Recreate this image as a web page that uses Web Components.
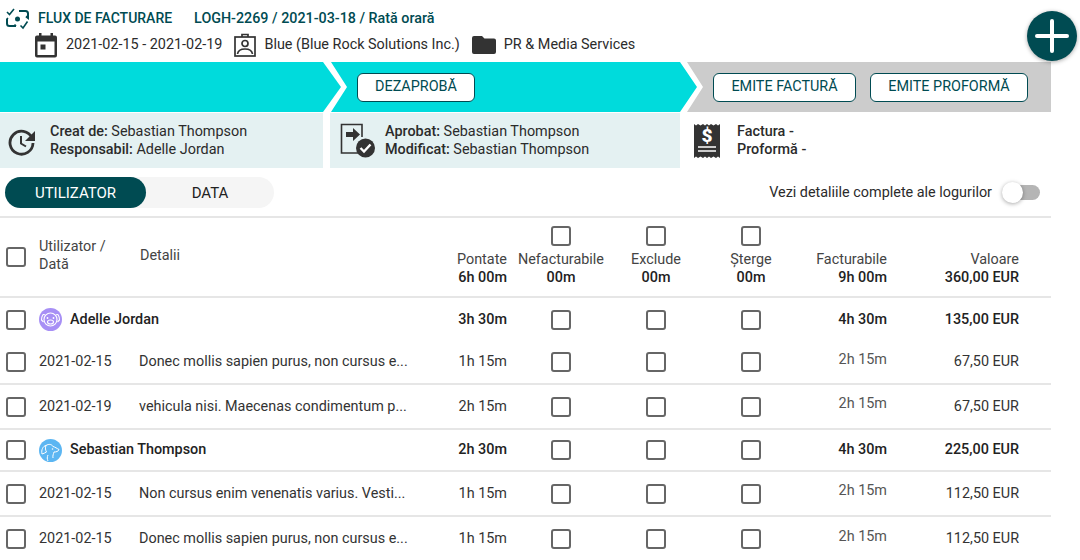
<!DOCTYPE html>
<html lang="ro">
<head>
<meta charset="utf-8">
<title>Flux de facturare</title>
<style>
  html, body { margin: 0; height: 100%; overflow: hidden; background: #fff; }
  body { font: 14.4px/18px Roboto, "Liberation Sans", sans-serif; color: #2b2b2b; }
</style>
</head>
<body>
<billing-page>
  <flow-header></flow-header>
  <flow-bar></flow-bar>
  <info-row></info-row>
  <view-bar></view-bar>
  <log-table>
    <log-head></log-head>
    <log-row pontate="3h 30m" fact="4h 30m" val="135,00 EUR" group h="43">
      <user-name slot="date" avatar="pig">Adelle Jordan</user-name>
    </log-row>
    <log-row pontate="1h 15m" fact="2h 15m" val="67,50 EUR" h="44" lined>
      <span slot="date">2021-02-15</span><span slot="details">Donec mollis sapien purus, non cursus e...</span>
    </log-row>
    <log-row pontate="2h 15m" fact="2h 15m" val="67,50 EUR" h="45" lined>
      <span slot="date">2021-02-19</span><span slot="details">vehicula nisi. Maecenas condimentum p...</span>
    </log-row>
    <log-row pontate="2h 30m" fact="4h 30m" val="225,00 EUR" group h="42" lined>
      <user-name slot="date" avatar="dog">Sebastian Thompson</user-name>
    </log-row>
    <log-row pontate="1h 15m" fact="2h 15m" val="112,50 EUR" h="45" lined>
      <span slot="date">2021-02-15</span><span slot="details">Non cursus enim venenatis varius. Vesti...</span>
    </log-row>
    <log-row pontate="1h 15m" fact="2h 15m" val="112,50 EUR" h="44">
      <span slot="date">2021-02-15</span><span slot="details">Donec mollis sapien purus, non cursus e...</span>
    </log-row>
  </log-table>
</billing-page>

<script>
const DARK = '#004b52';
const GRID = '34px 100px 278px 89px 108px 82px 108px 82px 132px';

const ICONS = {
  flux: `<svg width="25" height="24" viewBox="0 0 25 24" fill="none" stroke="${DARK}" stroke-width="2"><path d="M2 6l2.5 2.5L9 3" stroke-width="1.6"/><path d="M14 5h6.5a2.5 2.5 0 0 1 2.5 2.5V12l-2-1.6M2 13v4.500a2.500 2.500 0 0 0 2.500 2.500H11"/><path d="M16 21l2.500 2.500L23 17" stroke-width="1.600" transform="translate(-.5 -1.500)"/><path d="M3 12l-1.500 1.500M11 20l-1.500-1.500" stroke-width="1.600"/><circle cx="12.500" cy="13" r="2.500" fill="${DARK}" stroke="none"/><circle cx="6" cy="13" r="1.200" fill="${DARK}" stroke="none" opacity="0"/></svg>`,
  calendar: `<svg width="24" height="26" viewBox="0 0 24 26"><path fill="#333" d="M5 1h2.500v2.500h9V1H19v2.500h2A2 2 0 0 1 23 5.500v18a2 2 0 0 1-2 2H3a2 2 0 0 1-2-2v-18a2 2 0 0 1 2-2h2zM3.500 9.500v13.500h17V9.500z"/><rect x="6.500" y="12.500" width="5" height="5" fill="#333"/></svg>`,
  badge: `<svg width="22" height="24" viewBox="0 0 22 24" fill="none" stroke="#333" stroke-width="1.700"><rect x="1" y="4" width="20" height="19"/><path d="M8 4V1.500h6V4"/><circle cx="11" cy="10.500" r="3"/><path d="M3.500 21c.5-3.500 4-5 7.500-5s7 1.500 7.500 5"/></svg>`,
  folder: `<svg width="24" height="20" viewBox="0 0 24 20"><path fill="#333" d="M2 1h8l2.500 2.500H22a2 2 0 0 1 2 2V17a2 2 0 0 1-2 2H2a2 2 0 0 1-2-2V3a2 2 0 0 1 2-2z"/></svg>`,
  history: `<svg width="30" height="30" viewBox="0 0 30 30" fill="none" stroke="#333" stroke-width="2.800"><path d="M25 12a11.500 11.500 0 1 0 1 5"/><path d="M14 10v7.500l5 3" stroke-width="2"/><path fill="#333" stroke="none" d="M28 5v10H18z"/></svg>`,
  approve: `<svg width="36" height="36" viewBox="0 0 36 36"><path fill="none" stroke="#333" stroke-width="1.600" d="M22 30H1.500V1.500H22V14"/><path fill="#333" d="M6 9h7V5l7 6.500-7 6.500v-4H6z"/><circle cx="25.500" cy="25" r="9.500" fill="#333"/><path fill="none" stroke="#fff" stroke-width="2.400" d="M20.500 25l3.500 3.500 6.500-7"/></svg>`,
  receipt: `<svg width="26" height="36" viewBox="0 0 26 36"><path fill="#333" d="M0 1l2 1.500L4 1l2.500 1.500L9 1l2 1.500L13 1l2 1.500L17 1l2.500 1.500L22 1l2 1.500L26 1v34l-2-1.500-2 1.500-2.500-1.500L17 35l-2-1.500-2 1.500-2-1.500L9 35l-2.500-1.500L4 35l-2-1.500L0 35z"/><text x="13" y="19" text-anchor="middle" fill="#fff" font-family="Roboto, sans-serif" font-weight="900" font-size="19">$</text><path stroke="#fff" stroke-width="1.500" d="M4 24h18M4 28h18"/></svg>`,
  pig: `<svg width="23" height="23" viewBox="0 0 23 23"><circle cx="11.500" cy="11.500" r="11.500" fill="#a78ff5"/><g fill="none" stroke="#fff" stroke-width="1.100"><circle cx="11.500" cy="11.500" r="6.500"/><path d="M6 7C4 5.500 2.500 8 2.500 12l2 2M17 7c2-1.500 3.500 1 3.500 5l-2 2"/><ellipse cx="11.500" cy="14" rx="3" ry="2"/></g><circle cx="8.500" cy="10" r=".9" fill="#fff"/><circle cx="14.500" cy="10" r=".9" fill="#fff"/></svg>`,
  dog: `<svg width="23" height="23" viewBox="0 0 23 23"><circle cx="11.500" cy="11.500" r="11.500" fill="#5cb6f2"/><g fill="none" stroke="#fff" stroke-width="1"><path d="M3 15c-1-4 1-8 4-8.500 3-2 6-1 7 1 2 .5 4 2 6 3-.5 2-3 2.500-5 2.500-.5 2-1.500 3.500-1 6"/><path d="M7 6.500c-1 2-.5 5 .5 6.500-1.500 1-3 1.500-4.500 2M9 22c-1-2-1-4 0-6"/></g><circle cx="13.500" cy="10" r=".8" fill="#fff"/></svg>`
};

function define(name, css, html, setup) {
  customElements.define(name, class extends HTMLElement {
    constructor() {
      super();
      this.attachShadow({ mode: 'open' });
    }
    connectedCallback() {
      const body = typeof html === 'function' ? html(this) : html;
      this.shadowRoot.innerHTML = `<style>${css}</style>${body}`;
      if (setup) setup(this);
    }
  });
}

define('billing-page', `
  :host { display: block; position: relative; width: 1080px; height: 560px; overflow: hidden; }
  .fab { position: absolute; left: 1027px; top: 11px; width: 50px; height: 50px; border-radius: 50%;
         background: ${DARK}; box-shadow: 0 1px 4px rgba(0,0,0,.35); z-index: 5; }
  .fab::before, .fab::after { content: ""; position: absolute; background: #fff; border-radius: 2px; }
  .fab::before { left: 8px; right: 8px; top: 23px; height: 4px; }
  .fab::after { top: 8px; bottom: 8px; left: 23px; width: 4px; }
`, `<slot></slot><div class="fab"></div>`);

define('flow-header', `
  :host { display: block; height: 62px; box-sizing: border-box; padding: 6px 0 0 5px; }
  .top { display: flex; align-items: center; height: 24px; color: ${DARK}; font-weight: 500; font-size: 14px; }
  .top svg { margin-right: 8px; }
  .top b { font-weight: 500; margin-left: 22px; font-size: 14.300px; }
  .sub { display: flex; align-items: center; height: 26px; margin: 2px 0 0 29px; }
  .sub svg { display: block; }
  .sub span { margin: 0 12px 0 8px; }
`, `
  <div class="top">${ICONS.flux}FLUX DE FACTURARE<b>LOGH-2269 / 2021-03-18 / Rată orară</b></div>
  <div class="sub">
    ${ICONS.calendar}<span>2021-02-15 - 2021-02-19</span>
    ${ICONS.badge}<span>Blue (Blue Rock Solutions Inc.)</span>
    ${ICONS.folder}<span>PR &amp; Media Services</span>
  </div>`);

define('flow-step', `
  :host { display: flex; align-items: center; gap: 14px; box-sizing: border-box; height: 50px;
          background: var(--bg, #00dbdc); margin-left: var(--over, 0); padding-left: 26px;
          clip-path: var(--shape); }
`, `<slot></slot>`);

define('flow-button', `
  :host { display: inline-flex; align-items: center; justify-content: center; box-sizing: border-box;
          height: 29px; background: #fff; border: 1.500px solid ${DARK}; border-radius: 6px;
          color: ${DARK}; font-size: 14.400px; }
`, `<slot></slot>`);

define('flow-bar', `
  :host { display: flex; width: 1051px; }
  .a { --shape: polygon(0 0, 323px 0, 341px 25px, 323px 50px, 0 50px); width: 341px; }
  .b { --shape: polygon(0 0, 349px 0, 366px 25px, 349px 50px, 0 50px, 16px 25px); width: 366px; --over: -10px; }
  .c { --shape: polygon(0 0, 100% 0, 100% 100%, 0 100%, 16px 25px); flex: 1; --over: -10px; --bg: #cccccc; }
`, `
  <flow-step class="a"></flow-step>
  <flow-step class="b"><flow-button style="width:118px">DEZAPROBĂ</flow-button></flow-step>
  <flow-step class="c"><flow-button style="width:143px">EMITE FACTURĂ</flow-button><flow-button style="width:158px">EMITE PROFORMĂ</flow-button></flow-step>
`);

define('info-block', `
  :host { display: flex; align-items: center; box-sizing: border-box; height: 55px; background: var(--bg, #e4f1f2);
          padding-left: var(--pad, 7px); line-height: 18px; }
  .ic { display: flex; width: var(--ic, 43px); flex: none; }
  ::slotted(b) { font-weight: 500; }
`, (el) => `<div class="ic">${ICONS[el.getAttribute('icon')]}</div><div><slot></slot></div>`);

define('info-row', `
  :host { display: grid; grid-template-columns: 323px 350px 1fr; column-gap: 7px; width: 1051px; margin-top: 1px; }
  b { font-weight: 500; }
  .c { --bg: transparent; --ic: 43px; --pad: 14px; margin-left: -7px; }
  .b { --ic: 45px; --pad: 10px; }
`, `
  <info-block icon="history"><b slot="">Creat de:</b> Sebastian Thompson<br><b>Responsabil:</b> Adelle Jordan</info-block>
  <info-block class="b" icon="approve"><b>Aprobat:</b> Sebastian Thompson<br><b>Modificat:</b> Sebastian Thompson</info-block>
  <info-block class="c" icon="receipt"><b>Factura -</b><br><b>Proformă -</b></info-block>
`);

define('view-bar', `
  :host { display: flex; align-items: center; justify-content: space-between; box-sizing: border-box; width: 1051px;
          height: 50px; padding: 10px 11px 9px 5px; border-bottom: 2px solid #e6e6e6; font-size: 14.400px; }
  .tabs { display: flex; width: 269px; height: 31px; border-radius: 16px; background: #f5f5f5; font-size: 15px; color: #222; }
  .tabs div { display: flex; align-items: center; justify-content: center; border-radius: 16px; }
  .on { width: 141px; background: ${DARK}; color: #fff; }
  .off { flex: 1; }
  .sw { display: flex; align-items: center; gap: 11px; }
  .track { position: relative; width: 37px; height: 15px; border-radius: 8px; background: #b5b5b5; }
  .knob { position: absolute; left: -1px; top: -3px; width: 21px; height: 21px; border-radius: 50%; background: #fff;
          box-shadow: 0 1px 4px rgba(0,0,0,.35); }
`, `
  <div class="tabs"><div class="on">UTILIZATOR</div><div class="off">DATA</div></div>
  <div class="sw">Vezi detaliile complete ale logurilor<div class="track"><div class="knob"></div></div></div>
`);

define('check-box', `
  :host { display: block; box-sizing: border-box; width: 20px; height: 20px; background: #fff;
          border: 2px solid #666; border-radius: 3px; }
`, ``);

define('log-table', `:host { display: block; width: 1051px; }`, `<slot></slot>`);

define('log-head', `
  :host { display: grid; grid-template-columns: ${GRID}; box-sizing: border-box; height: 80px; padding-left: 6px;
          border-bottom: 2px solid #e6e6e6; color: #444; }
  .mid { align-self: center; }
  .num { align-self: end; padding-bottom: 9px; text-align: right; }
  .tick { align-self: end; padding-bottom: 9px; display: flex; flex-direction: column; align-items: center; }
  .tick check-box { margin-bottom: 5px; }
  b { display: block; font-weight: 500; color: #222; }
  .c0 { margin-left: -1px; }
`, `
  <check-box class="mid"></check-box>
  <div class="mid c0" style="margin-top:-2px">Utilizator /<br>Dată</div>
  <div class="mid" style="margin-top:-2px">Detalii</div>
  <div class="num">Pontate<b>6h 00m</b></div>
  <div class="tick"><check-box></check-box>Nefacturabile<b>00m</b></div>
  <div class="tick"><check-box></check-box>Exclude<b>00m</b></div>
  <div class="tick"><check-box></check-box>Șterge<b>00m</b></div>
  <div class="num">Facturabile<b>9h 00m</b></div>
  <div class="num">Valoare<b>360,00 EUR</b></div>
`);

define('log-row', `
  :host { display: grid; grid-template-columns: ${GRID}; align-items: center; box-sizing: border-box;
          height: var(--h); padding-left: 6px; color: #333; }
  :host([lined]) { border-bottom: 2px solid #e6e6e6; }
  :host([group]) { font-weight: 500; color: #222; }
  .num { text-align: right; }
  .tick { justify-self: center; }
  .fact { padding-bottom: 5px; color: #555; font-size: 14.400px; }
  :host([group]) .fact { padding-bottom: 0; color: #222; }
  .who { white-space: nowrap; margin-left: -1px; }
`, (el) => `
  <check-box></check-box>
  <div class="who"><slot name="date"></slot></div>
  <div class="who"><slot name="details"></slot></div>
  <div class="num">${el.getAttribute('pontate')}</div>
  <check-box class="tick"></check-box>
  <check-box class="tick"></check-box>
  <check-box class="tick"></check-box>
  <div class="num fact">${el.getAttribute('fact')}</div>
  <div class="num">${el.getAttribute('val')}</div>
`, (el) => el.style.setProperty('--h', el.getAttribute('h') + 'px'));

define('user-name', `
  :host { display: flex; align-items: center; gap: 8px; }
  svg { display: block; flex: none; }
`, (el) => `${ICONS[el.getAttribute('avatar')]}<slot></slot>`);
</script>
</body>
</html>
